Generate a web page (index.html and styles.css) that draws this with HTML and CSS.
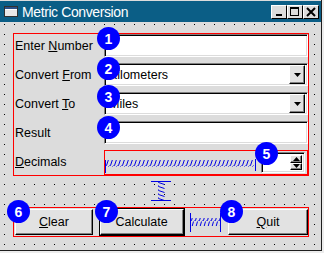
FILE: index.html
```html
<!DOCTYPE html>
<html lang="en">
<head>
    <meta charset="UTF-8">
    <title>Metric Conversion</title>
    <link rel="stylesheet" href="styles.css">
</head>
<body>

    <div class="window">
        <div class="titlebar">
            <svg class="app-icon" width="14" height="11" viewBox="0 0 14 11">
                <rect x="0.5" y="0.5" width="13" height="10" fill="#e8e8e8" stroke="#303030"/>
                <rect x="1" y="1" width="12" height="2" fill="#2c4f86"/>
                <line x1="1" y1="3.5" x2="13" y2="3.5" stroke="#fff"/>
            </svg>
            <span class="title">Metric Conversion</span>
            <div class="title-buttons">
                <span class="tbtn">
                    <svg width="14" height="12"><rect x="4" y="8" width="6" height="2" fill="#000"/></svg>
                </span>
                <span class="tbtn">
                    <svg width="13" height="12"><rect x="2.5" y="1.5" width="8" height="8" fill="none" stroke="#000"/><rect x="2" y="1" width="9" height="2" fill="#000"/></svg>
                </span>
                <span class="tbtn">
                    <svg width="14" height="12"><path d="M3 2 L11 10 M11 2 L3 10" stroke="#000" stroke-width="2"/></svg>
                </span>
            </div>
        </div>

        <div class="client">
            <div class="form">
                <label class="lbl">Enter <u>N</u>umber</label>
                <div class="lineedit"></div>

                <label class="lbl">Convert <u>F</u>rom</label>
                <div class="combo">
                    <span class="combo-text">Kilometers</span>
                    <span class="combo-btn"><svg width="7" height="4"><polygon points="0,0 7,0 3.5,4" fill="#000"/></svg></span>
                </div>

                <label class="lbl">Convert <u>T</u>o</label>
                <div class="combo">
                    <span class="combo-text">Miles</span>
                    <span class="combo-btn"><svg width="7" height="4"><polygon points="0,0 7,0 3.5,4" fill="#000"/></svg></span>
                </div>

                <label class="lbl">Result</label>
                <div class="lineedit"></div>

                <label class="lbl lbl-last"><u>D</u>ecimals</label>
                <div class="hbox">
                    <svg class="hspring" height="14" preserveAspectRatio="none">
                        <defs>
                            <pattern id="coil" width="4" height="7" patternUnits="userSpaceOnUse">
                                <path d="M0.5 6.5 L1.5 6.5 L3.5 0.5" stroke="#0000e6" fill="none"/>
                            </pattern>
                        </defs>
                        <line x1="0.5" y1="1" x2="0.5" y2="14" stroke="#0000e6"/>
                        <rect x="1" y="1" width="148" height="7" fill="url(#coil)"/>
                        <line x1="150.5" y1="0" x2="150.5" y2="12" stroke="#0000e6"/>
                    </svg>
                    <div class="spin">
                        <span class="spin-btns">
                            <span class="spin-btn"><svg width="7" height="4"><polygon points="0,4 7,4 3.5,0" fill="#000"/></svg></span>
                            <span class="spin-btn"><svg width="7" height="4"><polygon points="0,0 7,0 3.5,4" fill="#000"/></svg></span>
                        </span>
                    </div>
                </div>
            </div>

            <div class="vspace">
                <svg width="20" height="20">
                    <defs>
                        <pattern id="vcoil" width="7" height="4" patternUnits="userSpaceOnUse">
                            <path d="M0.5 0.5 L0.5 1.5 L6.5 3.5" stroke="#0000e6" fill="none"/>
                        </pattern>
                    </defs>
                    <line x1="0" y1="0.5" x2="20" y2="0.5" stroke="#0000e6"/>
                    <rect x="7" y="1" width="7" height="18" fill="url(#vcoil)"/>
                    <line x1="0" y1="19.5" x2="20" y2="19.5" stroke="#0000e6"/>
                </svg>
            </div>

            <div class="buttons">
                <button class="btn btn-clear"><u>C</u>lear</button>
                <button class="btn btn-default">Calculate</button>
                <svg class="bspring" width="31" height="19">
                    <defs>
                        <pattern id="coil2" width="4" height="8" patternUnits="userSpaceOnUse">
                            <path d="M0.5 7.5 L1.5 7.5 L3.5 0.5" stroke="#0000e6" fill="none"/>
                        </pattern>
                    </defs>
                    <line x1="0.5" y1="0" x2="0.5" y2="19" stroke="#0000e6"/>
                    <rect x="1" y="5" width="29" height="8" fill="url(#coil2)"/>
                    <line x1="30.5" y1="0" x2="30.5" y2="19" stroke="#0000e6"/>
                </svg>
                <button class="btn btn-quit"><u>Q</u>uit</button>
            </div>
        </div>

        <span class="badge b1">1</span>
        <span class="badge b2">2</span>
        <span class="badge b3">3</span>
        <span class="badge b4">4</span>
        <span class="badge b5">5</span>
        <span class="badge b6">6</span>
        <span class="badge b7">7</span>
        <span class="badge b8">8</span>
    </div>

</body>
</html>
```

FILE: styles.css
```css
body {
    margin: 0;
    background-color: #ececec;
    font-family: "Liberation Sans", Arial, sans-serif;
}
.window {
    position: relative;
    width: 321px;
    height: 250px;
    background-color: #dcdcdc;
    border-right: 1px solid #1e1e1e;
    border-bottom: 1px solid #1e1e1e;
    display: flex;
    flex-direction: column;
}
.titlebar {
    margin-top: 1px;
    height: 21px;
    background-color: #0b5e86;
    display: flex;
    align-items: center;
    padding-left: 4px;
}
.app-icon {
    flex: none;
}
.title {
    margin-left: 4px;
    color: #fff;
    font-size: 14px;
    letter-spacing: -0.4px;
}
.title-buttons {
    margin-left: auto;
    margin-right: 2px;
    display: flex;
}
.tbtn {
    width: 14px;
    height: 12px;
    background-color: #dcdcdc;
    border: 1px solid;
    border-color: #fff #000 #000 #fff;
    display: flex;
}
.client {
    flex: 1;
    padding: 11px 12px 0 13px;
    background-color: #dcdcdc;
    background-image: conic-gradient(at 1px 1px, transparent 75%, #000 0);
    background-size: 10px 10px;
    background-position: 4px 2px;
}
.form {
    display: grid;
    grid-template-columns: 90px 205px;
    grid-template-rows: 23px 23px 23px 23px 25px;
    row-gap: 6px;
    border: 1px solid #ff0000;
    background-color: #dcdcdc;
}
.lbl {
    display: block;
    padding-left: 1px;
    font-size: 12.5px;
    line-height: 24px;
    white-space: nowrap;
    color: #000;
}
.lbl-last {
    line-height: 25px;
}
.lineedit,
.combo,
.spin {
    box-sizing: border-box;
    background-color: #fff;
    border: 1px solid;
    border-color: #808080 #fff #fff #808080;
    box-shadow: inset 1px 1px 0 #000, inset -1px -1px 0 #dcdcdc;
}
.lineedit,
.combo {
    width: 204px;
    height: 23px;
}
.combo {
    display: flex;
    align-items: center;
    padding: 2px;
}
.combo-text {
    flex: 1;
    padding-left: 2px;
    font-size: 12.5px;
}
.combo-btn,
.spin-btn {
    box-sizing: border-box;
    background-color: #e2e2e2;
    border: 1px solid;
    border-color: #fff #000 #000 #fff;
    box-shadow: inset -1px -1px 0 #808080;
    display: flex;
    align-items: center;
    justify-content: center;
}
.combo-btn {
    width: 16px;
    height: 19px;
}
.hbox {
    box-sizing: border-box;
    width: 204px;
    border: 1px solid #ff0000;
    border-bottom-width: 2px;
    margin-bottom: -1px;
    display: flex;
    align-items: center;
}
.hspring {
    width: 151px;
    margin-top: 6px;
}
.spin {
    width: 44px;
    height: 21px;
    margin-left: 5px;
    padding: 2px;
    display: flex;
    justify-content: flex-end;
}
.spin-btns {
    display: flex;
    flex-direction: column;
}
.spin-btn {
    width: 12px;
    height: 8.5px;
}
.vspace {
    height: 31px;
    display: flex;
    justify-content: center;
    align-items: flex-start;
    padding-top: 5px;
    box-sizing: border-box;
}
.buttons {
    display: flex;
    align-items: center;
    justify-content: space-between;
    height: 28px;
    border: 1px solid #ff0000;
    padding-left: 1px;
    background-color: #dcdcdc;
}
.btn {
    box-sizing: border-box;
    height: 26px;
    padding: 0;
    font-family: "Liberation Sans", Arial, sans-serif;
    font-size: 12.5px;
    color: #000;
    background-color: #e2e2e2;
    border: 1px solid;
    border-color: #fff #000 #000 #fff;
    box-shadow: inset -1px -1px 0 #808080;
}
.btn-clear {
    width: 78px;
}
.btn-default {
    width: 84px;
    outline: 1px solid #000;
}
.btn-quit {
    width: 80px;
}
.badge {
    position: absolute;
    width: 23px;
    height: 23px;
    border-radius: 50%;
    background-color: #0000ff;
    color: #fff;
    font-weight: bold;
    font-size: 14px;
    display: flex;
    align-items: center;
    justify-content: center;
}
.b1 { left: 97px; top: 27px; }
.b2 { left: 97px; top: 57px; }
.b3 { left: 97px; top: 85px; }
.b4 { left: 97px; top: 116px; }
.b5 { left: 255px; top: 142px; }
.b6 { left: 7px; top: 200px; }
.b7 { left: 95px; top: 200px; }
.b8 { left: 220px; top: 200px; }
```
